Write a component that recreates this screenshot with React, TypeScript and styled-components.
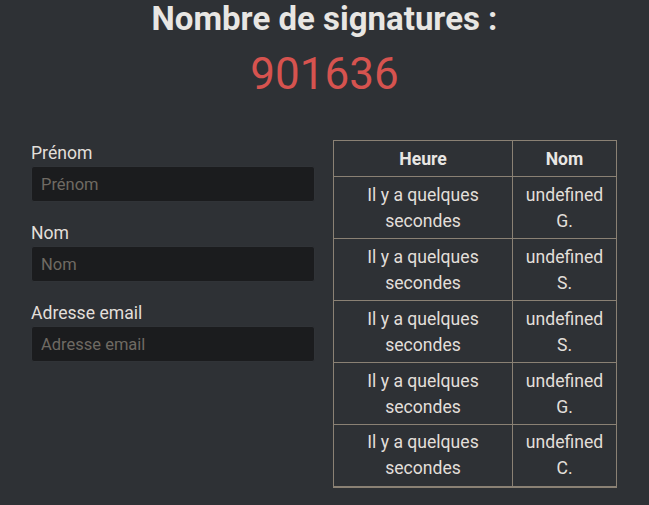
import React from "react";
import styled, {createGlobalStyle} from "styled-components";

const GlobalStyle = createGlobalStyle`
  html, body {
    margin: 0;
    padding: 0;
    background: #2e3135;
  }
  body {
    font-family: Roboto, "Liberation Sans", sans-serif;
    color: #e8e6e3;
  }
`

type Signature = {
   time: string
   name: string
   initial: string
}

const signatures: Signature[] = [
   {time: "Il y a quelques secondes", name: "undefined", initial: "G."},
   {time: "Il y a quelques secondes", name: "undefined", initial: "S."},
   {time: "Il y a quelques secondes", name: "undefined", initial: "S."},
   {time: "Il y a quelques secondes", name: "undefined", initial: "G."},
   {time: "Il y a quelques secondes", name: "undefined", initial: "C."},
];

const fields = [
   {label: "Prénom", type: "text"},
   {label: "Nom", type: "text"},
   {label: "Adresse email", type: "email"},
];

export default function App() {
   return (
      <Page>
         <GlobalStyle/>
         <Header>
            <Title>Nombre de signatures :</Title>
            <Counter>901636</Counter>
         </Header>
         <Columns>
            <Form onSubmit={e => e.preventDefault()}>
               {fields.map(f => (
                  <Field key={f.label}>
                     <Label>{f.label}</Label>
                     <Input type={f.type} placeholder={f.label}/>
                  </Field>
               ))}
            </Form>
            <Table>
               <thead>
               <tr>
                  <Th>Heure</Th>
                  <Th>Nom</Th>
               </tr>
               </thead>
               <tbody>
               {signatures.map((s, i) => (
                  <tr key={i}>
                     <TimeCell>{s.time}</TimeCell>
                     <NameCell>{s.name}<br/>{s.initial}</NameCell>
                  </tr>
               ))}
               </tbody>
            </Table>
         </Columns>
      </Page>
   );
}

const Page = styled.div`
  width: 649px;
  height: 505px;
  overflow: hidden;
`
const Header = styled.header`
  display: flex;
  flex-direction: column;
  align-items: center;
`
const Title = styled.h1`
  margin: 0;
  font-size: 33px;
  line-height: 38px;
  font-weight: 700;
  color: #e8e6e3;
`
const Counter = styled.div`
  margin-top: 11px;
  font-size: 44px;
  line-height: 50px;
  color: #d6534f;
`
const Columns = styled.div`
  display: grid;
  grid-template-columns: 284px 284px;
  column-gap: 18px;
  margin: 41px 0 0 31px;
  align-items: start;
`
const Form = styled.form`
  display: flex;
  flex-direction: column;
  gap: 18px;
`
const Field = styled.div`
  display: flex;
  flex-direction: column;
`
const Label = styled.label`
  font-size: 17.6px;
  line-height: 26px;
  color: #e2dfda;
`
const Input = styled.input`
  box-sizing: border-box;
  height: 36px;
  padding: 0 9px;
  border: 1px solid #303337;
  border-radius: 3px;
  background: #1b1c1e;
  color: #e8e6e3;
  font-family: Roboto, "Liberation Sans", sans-serif;
  font-size: 16.5px;
  &::placeholder {
    color: #6f6a63;
  }
  &:focus {
    outline: none;
  }
`
const Table = styled.table`
  width: 284px;
  border-collapse: collapse;
  border: 1px solid #8a8174;
  border-bottom-width: 2px;
  font-size: 17.6px;
`
const Th = styled.th`
  border: 1px solid #8a8174;
  padding: 4px 6px;
  height: 36px;
  box-sizing: border-box;
  line-height: 26px;
  font-weight: 700;
  color: #e8e6e3;
  &:first-child {
    width: 179px;
  }
`
const TimeCell = styled.td`
  border: 1px solid #8a8174;
  padding: 4px 14px;
  height: 62px;
  box-sizing: border-box;
  line-height: 26px;
  text-align: center;
  color: #e2dfda;
`
const NameCell = styled(TimeCell)`
  padding: 4px 6px;
`
